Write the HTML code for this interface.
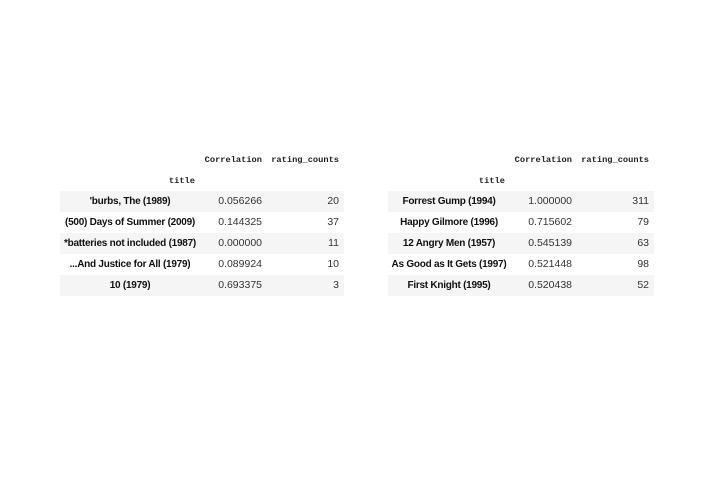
<!DOCTYPE html>
<html><head><style>
body{margin:0;width:720px;height:480px;background:#fff;position:relative;font-family:"Liberation Sans",sans-serif;color:#222;}
.t{position:absolute;}
.h{position:absolute;font-family:"Liberation Mono",monospace;font-size:8.7px;font-weight:bold;color:#222;white-space:nowrap;}
.r{position:absolute;height:21px;line-height:21px;font-size:10.5px;white-space:nowrap;}
.g{background:#f5f5f5;}
.c1{position:absolute;text-align:center;font-weight:bold;color:#111;font-size:10px;letter-spacing:-0.25px;}
.c2,.c3{position:absolute;text-align:right;color:#333;}
</style></head><body>
<div class="t" style="left:60px;top:150px;width:284px;">
<div class="h" style="right:82px;top:5px;">Correlation</div>
<div class="h" style="right:5px;top:5px;">rating_counts</div>
<div class="h" style="right:149px;top:26px;">title</div>
</div>
<div class="t" style="left:60px;top:191px;width:284px;">
<div class="r g" style="top:0;width:284px"><span class="c1" style="left:0;width:140px">'burbs, The (1989)</span><span class="c2" style="right:82px">0.056266</span><span class="c3" style="right:5px">20</span></div>
<div class="r" style="top:21px;width:284px"><span class="c1" style="left:0;width:140px">(500) Days of Summer (2009)</span><span class="c2" style="right:82px">0.144325</span><span class="c3" style="right:5px">37</span></div>
<div class="r g" style="top:42px;width:284px"><span class="c1" style="left:0;width:140px">*batteries not included (1987)</span><span class="c2" style="right:82px">0.000000</span><span class="c3" style="right:5px">11</span></div>
<div class="r" style="top:63px;width:284px"><span class="c1" style="left:0;width:140px">...And Justice for All (1979)</span><span class="c2" style="right:82px">0.089924</span><span class="c3" style="right:5px">10</span></div>
<div class="r g" style="top:84px;width:284px"><span class="c1" style="left:0;width:140px">10 (1979)</span><span class="c2" style="right:82px">0.693375</span><span class="c3" style="right:5px">3</span></div>
</div>

<div class="t" style="left:388px;top:150px;width:266px;">
<div class="h" style="right:82px;top:5px;">Correlation</div>
<div class="h" style="right:5px;top:5px;">rating_counts</div>
<div class="h" style="right:149px;top:26px;">title</div>
</div>
<div class="t" style="left:388px;top:191px;width:266px;">
<div class="r g" style="top:0;width:266px"><span class="c1" style="left:0;width:122px">Forrest Gump (1994)</span><span class="c2" style="right:82px">1.000000</span><span class="c3" style="right:5px">311</span></div>
<div class="r" style="top:21px;width:266px"><span class="c1" style="left:0;width:122px">Happy Gilmore (1996)</span><span class="c2" style="right:82px">0.715602</span><span class="c3" style="right:5px">79</span></div>
<div class="r g" style="top:42px;width:266px"><span class="c1" style="left:0;width:122px">12 Angry Men (1957)</span><span class="c2" style="right:82px">0.545139</span><span class="c3" style="right:5px">63</span></div>
<div class="r" style="top:63px;width:266px"><span class="c1" style="left:0;width:122px">As Good as It Gets (1997)</span><span class="c2" style="right:82px">0.521448</span><span class="c3" style="right:5px">98</span></div>
<div class="r g" style="top:84px;width:266px"><span class="c1" style="left:0;width:122px">First Knight (1995)</span><span class="c2" style="right:82px">0.520438</span><span class="c3" style="right:5px">52</span></div>
</div>
</body></html>
